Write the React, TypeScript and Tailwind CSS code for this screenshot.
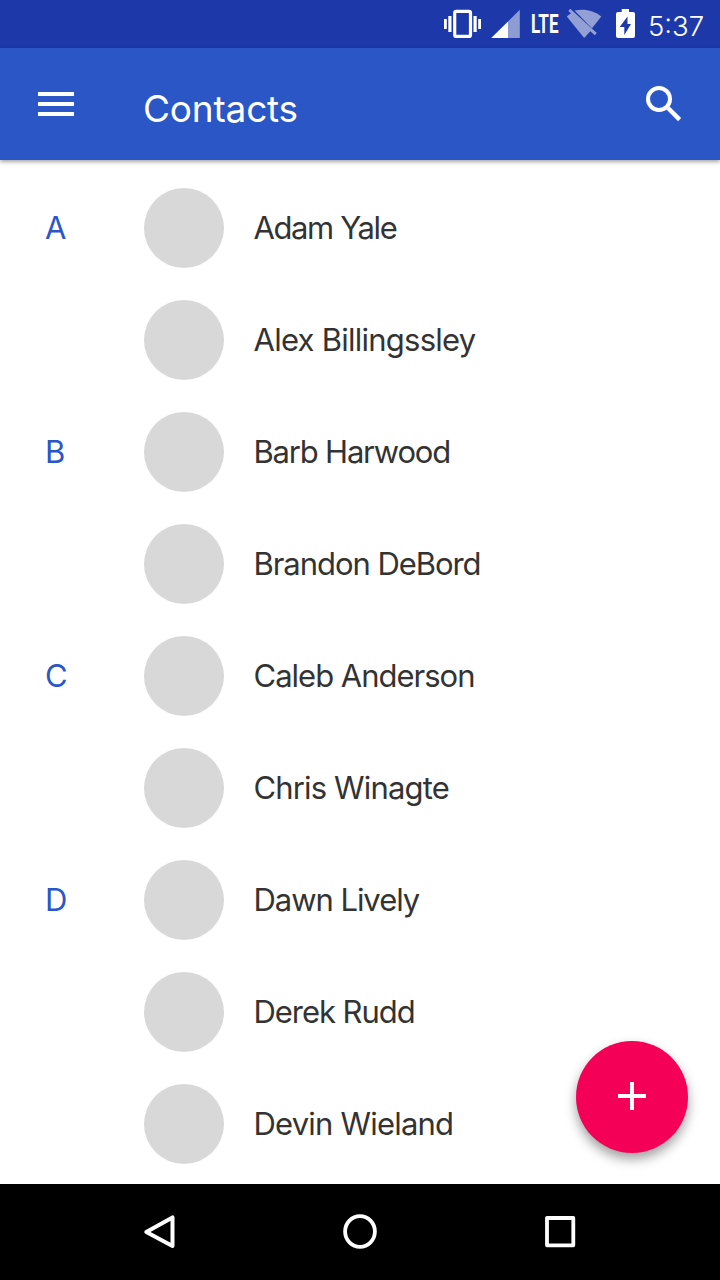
import React from "react";

type Contact = { name: string; tracking: string; letter?: string };

const contacts: Contact[] = [
  { name: "Adam Yale", tracking: "tracking-[-1.4px]", letter: "A" },
  { name: "Alex Billingssley", tracking: "tracking-[-0.75px]" },
  { name: "Barb Harwood", tracking: "tracking-[-1.2px]", letter: "B" },
  { name: "Brandon DeBord", tracking: "tracking-[-1.05px]" },
  { name: "Caleb Anderson", tracking: "tracking-[-1px]", letter: "C" },
  { name: "Chris Winagte", tracking: "tracking-[-0.85px]" },
  { name: "Dawn Lively", tracking: "tracking-[-1.05px]", letter: "D" },
  { name: "Derek Rudd", tracking: "tracking-[-1.05px]" },
  { name: "Devin Wieland", tracking: "tracking-[-0.8px]" },
];

function StatusBar() {
  return (
    <div className="flex h-12 shrink-0 items-center justify-end bg-[#1d39a9] pr-4 text-white">
      <svg className="mr-[10px] h-12 w-[37px]" viewBox="444 0 37 48" fill="#fff">
        <rect x="454.7" y="11.4" width="15.8" height="25" rx="1.5" fill="none" stroke="#fff" strokeWidth="3.2" />
        <rect x="448.3" y="16" width="3.2" height="16" />
        <rect x="444" y="19" width="2.8" height="10" />
        <rect x="473.5" y="16" width="3.2" height="16" />
        <rect x="478.2" y="19" width="2.8" height="10" />
      </svg>
      <svg className="mr-[11px] h-12 w-[29px]" viewBox="491 0 29 48" fill="#fff">
        <path d="M508 21.5 L519.8 9.7 V38 H508 Z" opacity=".5" />
        <path d="M491.2 38 L508 21.5 V38 Z" />
      </svg>
      <div className="flex h-12 w-[36px] items-center">
        <span className="mt-[2px] origin-left scale-x-[0.67] font-['Roboto'] text-[25.5px] leading-none font-bold">LTE</span>
      </div>
      <svg className="mr-[14px] h-12 w-[35px]" viewBox="567 0 35 48" fill="#fff" opacity=".52">
        <path d="M574.5 10.6 C584 8.2 594 10.6 601.3 16.4 L592 28.2 Z" />
        <path d="M570.2 8.8 L596.8 33 L594.8 35.3 L590.3 31.2 L584.2 38 L566.8 16.4 L571 13.3 L568.3 10.9 Z" />
      </svg>
      <svg className="mr-[13px] h-12 w-[19px]" viewBox="616 0 19 48">
        <path fill="#fff" fillRule="evenodd" d="M621.7 12 V9 H629 V12 H633 Q635 12 635 14 V36 Q635 38 633 38 H618 Q616 38 616 36 V14 Q616 12 618 12 Z M627.5 16.5 L619.7 27 H624.3 V35 L631 23.9 H627.5 Z" />
      </svg>
      <span className="w-[56px] translate-y-[3px] text-[27.5px] leading-none font-light whitespace-nowrap">5:37</span>
    </div>
  );
}

function AppBar() {
  return (
    <header className="relative z-10 flex h-28 shrink-0 items-center bg-[#2a56c6] pr-[38px] pl-[38px] text-white shadow-[0_2px_4px_rgba(0,0,0,0.35)]">
      <button aria-label="Menu" className="mr-[69px] flex w-9 flex-col gap-[6px]">
        <span className="h-1 w-9 bg-white" />
        <span className="h-1 w-9 bg-white" />
        <span className="h-1 w-9 bg-white" />
      </button>
      <h1 className="mt-2 flex-1 text-[37px] leading-none font-normal tracking-[-0.2px]">Contacts</h1>
      <button aria-label="Search">
        <svg className="h-9 w-9" viewBox="646 86 36 36" fill="none" stroke="#fff">
          <circle cx="659" cy="99" r="11" strokeWidth="4" />
          <path d="M668 108 L679.6 119.6" strokeWidth="4.4" />
        </svg>
      </button>
    </header>
  );
}

function ContactRow({ name, tracking, letter }: Contact) {
  return (
    <li className="flex h-28 items-center pl-[45px]">
      <span className="mb-px w-[99px] text-[31px] leading-none text-[#2a56c6]">{letter}</span>
      <span className="mr-[29.5px] h-20 w-20 rounded-full bg-[#d8d8d8]" />
      <span className={`mb-px text-[31px] leading-none whitespace-nowrap text-[#333] ${tracking}`}>{name}</span>
    </li>
  );
}

export default function App() {
  return (
    <div className="relative flex h-[1280px] w-[720px] flex-col overflow-hidden bg-white font-['Inter',sans-serif]">
      <StatusBar />
      <AppBar />
      <ul className="min-h-0 flex-1 overflow-hidden pt-3">
        {contacts.map((c) => (
          <ContactRow key={c.name} {...c} />
        ))}
      </ul>
      <button
        aria-label="Add contact"
        className="absolute right-8 bottom-[127px] flex h-28 w-28 items-center justify-center rounded-full bg-[#f50057] shadow-[0_6px_12px_rgba(0,0,0,0.38)]"
      >
        <svg className="-mt-[2px] h-7 w-7" viewBox="0 0 28 28" fill="#fff">
          <path d="M12 0 H16 V12 H28 V16 H16 V28 H12 V16 H0 V12 H12 Z" />
        </svg>
      </button>
      <nav className="flex h-24 shrink-0 bg-black pl-[60px]">
        <svg className="h-24 w-[200px]" viewBox="60 1184 200 96" fill="none" stroke="#fff" strokeWidth="4" strokeLinejoin="round">
          <path d="M146.3 1232 L172.5 1217.4 V1246 Z" />
        </svg>
        <svg className="h-24 w-[200px]" viewBox="260 1184 200 96" fill="none" stroke="#fff" strokeWidth="3.8">
          <ellipse cx="360" cy="1231.5" rx="14.9" ry="15.4" />
        </svg>
        <svg className="h-24 w-[200px]" viewBox="460 1184 200 96" fill="none" stroke="#fff" strokeWidth="3.8" strokeLinejoin="round">
          <rect x="547" y="1218" width="26.3" height="27.3" />
        </svg>
      </nav>
    </div>
  );
}
